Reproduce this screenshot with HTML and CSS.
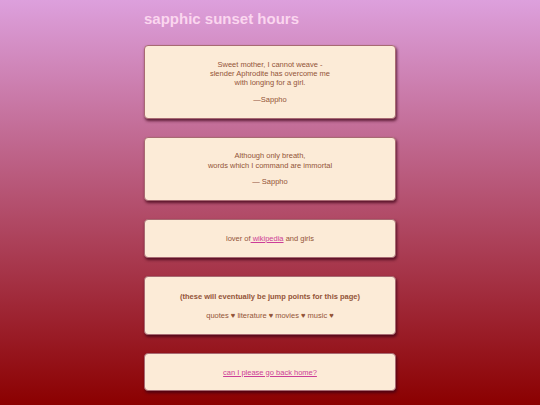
FILE: index.html
```html
<!DOCTYPE html>
<html>
<head>
<meta charset="utf-8">
<link rel="stylesheet" href="styles.css">
</head>
<body>
<main class="page">
  <h1 class="title">sapphic sunset hours</h1>
  <section class="card">
    <p>Sweet mother, I cannot weave -<br>slender Aphrodite has overcome me<br>with longing for a girl.</p>
    <p>—Sappho</p>
  </section>
  <section class="card">
    <p>Although only breath,<br>words which I command are immortal</p>
    <p>— Sappho</p>
  </section>
  <section class="card">
    <p>lover of<a href="#"> wikipedia</a> and girls</p>
  </section>
  <section class="card">
    <h4 class="jump-title">(these will eventually be jump points for this page)</h4>
    <p>quotes ♥ literature ♥ movies ♥ music ♥</p>
  </section>
  <section class="card">
    <p><a href="#">can I please go back home?</a></p>
  </section>
</main>
</body>
</html>
```
FILE: styles.css
```css
html, body {
  margin: 0;
  padding: 0;
}
body {
  min-height: 405px;
  background: linear-gradient(to bottom, #dda0dd 0%, #8b0000 100%);
  background-attachment: fixed;
  font-family: "Liberation Sans", Arial, sans-serif;
  font-size: 7.5px;
  line-height: 9.3px;
  color: #935437;
}
.page {
  width: 252px;
  margin: 0 auto;
  padding-top: 10px;
  display: flex;
  flex-direction: column;
  gap: 18.1px;
}
.title {
  margin: 0 0 -1px 0;
  font-size: 15px;
  line-height: 18px;
  font-weight: bold;
  color: #fbd6ef;
}
.card {
  background: #fcebd7;
  border: 1px solid #a86a72;
  border-radius: 4px;
  box-shadow: 1px 2px 3px rgba(60, 0, 20, 0.75);
  padding: 6px;
  text-align: center;
}
.card p {
  margin: 7.5px 0;
}
.jump-title {
  font-size: 7.5px;
  line-height: 9.3px;
  margin: 9.6px 0;
  font-weight: bold;
}
.card a {
  color: #cc3d98;
  text-decoration: underline;
}
```
